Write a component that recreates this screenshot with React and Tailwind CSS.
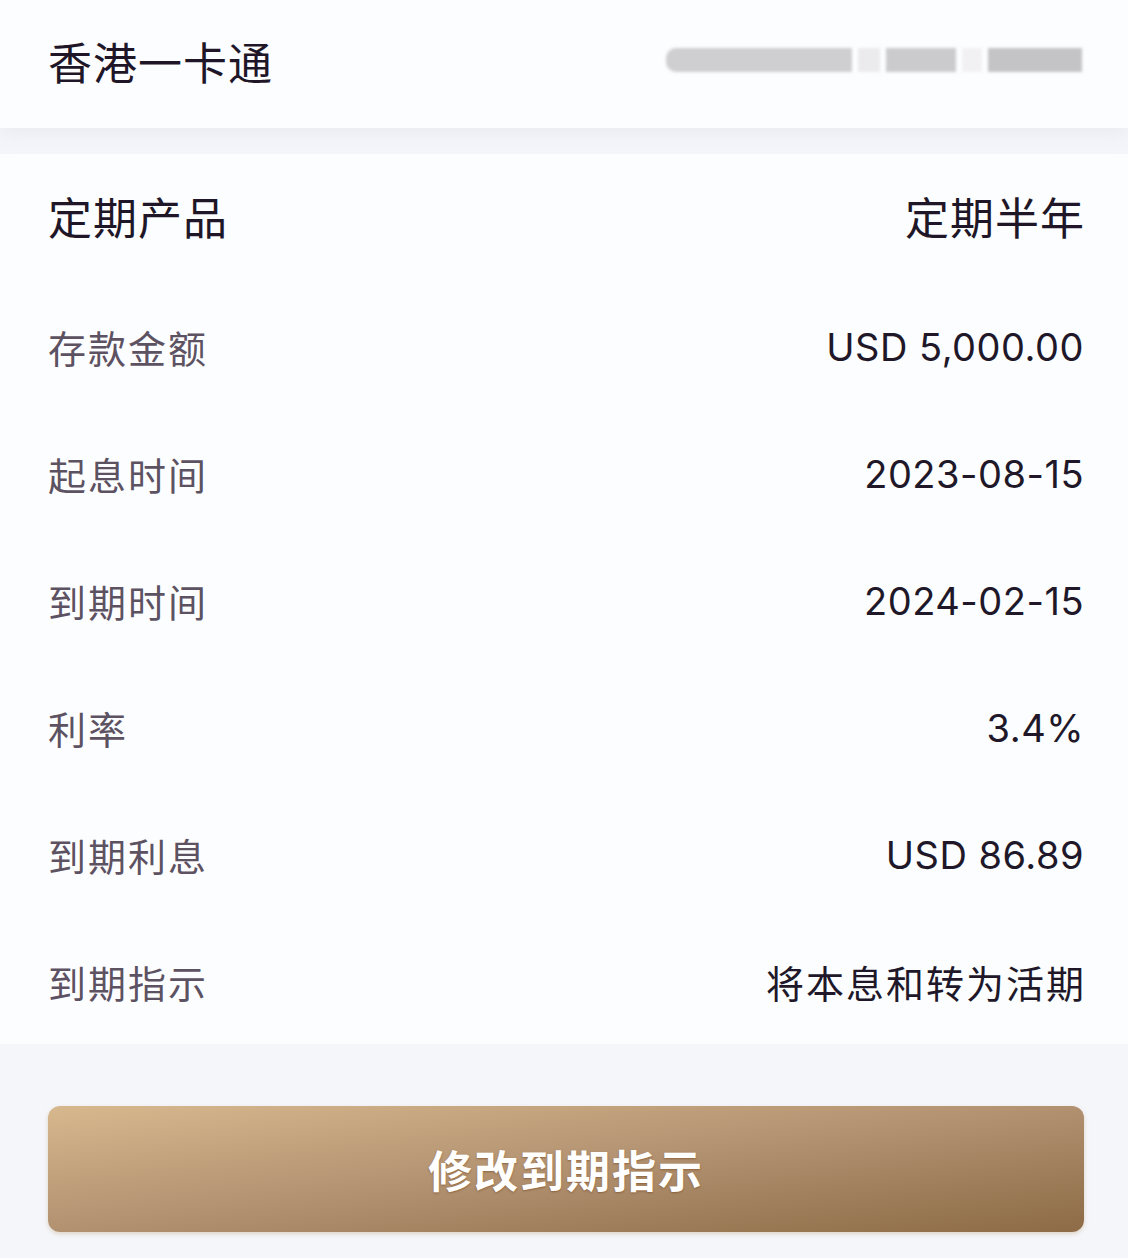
const rows = [
  { label: '存款金额', value: 'USD 5,000.00' },
  { label: '起息时间', value: '2023-08-15' },
  { label: '到期时间', value: '2024-02-15' },
  { label: '利率', value: '3.4%' },
  { label: '到期利息', value: 'USD 86.89' },
  { label: '到期指示', value: '将本息和转为活期', cjk: true },
];

const App = () => {
  return (
    <div
      className="w-[1128px] h-[1258px] bg-[#f5f6fa] flex flex-col"
      style={{ fontFamily: '"Noto Sans CJK SC", "Noto Sans", sans-serif' }}
    >
      <div className="bg-[#fcfdff] h-[128px] flex items-center justify-between pl-[48px] pr-[46px] shadow-[0_8px_16px_rgba(230,232,240,0.7)]">
        <span className="text-[44px] text-[#1f1727] leading-none tracking-[1px] pb-[6px]">香港一卡通</span>
        <div className="flex items-center gap-[6px] blur-[1.5px] pb-[8px]">
          <div className="w-[186px] h-[24px] rounded-l-[10px] bg-[#cfcfd2]" />
          <div className="w-[22px] h-[24px] bg-[#ebebed]" />
          <div className="w-[70px] h-[24px] bg-[#cbcbce]" />
          <div className="w-[20px] h-[24px] bg-[#f1f1f3]" />
          <div className="w-[94px] h-[24px] bg-[#c4c4c7]" />
        </div>
      </div>

      <div className="mt-[26px] bg-[#fcfdff] pl-[48px] pr-[44px] pt-[30px] pb-[34px]">
        <div className="h-[64px] flex items-center justify-between">
          <span className="text-[44px] text-[#1f1727] leading-none tracking-[1px]">定期产品</span>
          <span className="text-[44px] text-[#1f1727] leading-none tracking-[1px] mr-[-1px]">定期半年</span>
        </div>
        {rows.map((r) => (
          <div key={r.label} className="h-[127px] flex items-center justify-between pt-[70px]">
            <span className="text-[38px] text-[#5d5262] leading-none tracking-[2px]">{r.label}</span>
            {r.cjk ? (
              <span className="text-[38px] text-[#201829] leading-none tracking-[2px] mr-[-2px]">{r.value}</span>
            ) : (
              <span
                className="text-[38px] text-[#201829] leading-none tracking-[0.5px]"
                style={{ fontFamily: 'Inter, "Noto Sans CJK SC", sans-serif' }}
              >
                {r.value}
              </span>
            )}
          </div>
        ))}
      </div>

      <div className="pl-[48px] pr-[44px] pt-[62px]">
        <button className="w-full h-[126px] rounded-[12px] bg-gradient-to-br from-[#d7b88e] via-[#b19170] to-[#8d6b46] shadow-[0_2px_4px_rgba(180,150,110,0.35)] flex items-center justify-center">
          <span className="text-[44px] font-bold text-white leading-none tracking-[2px] [text-shadow:0_1px_2px_rgba(120,70,30,0.6)]">
            修改到期指示
          </span>
        </button>
      </div>
    </div>
  );
};

export default App;
